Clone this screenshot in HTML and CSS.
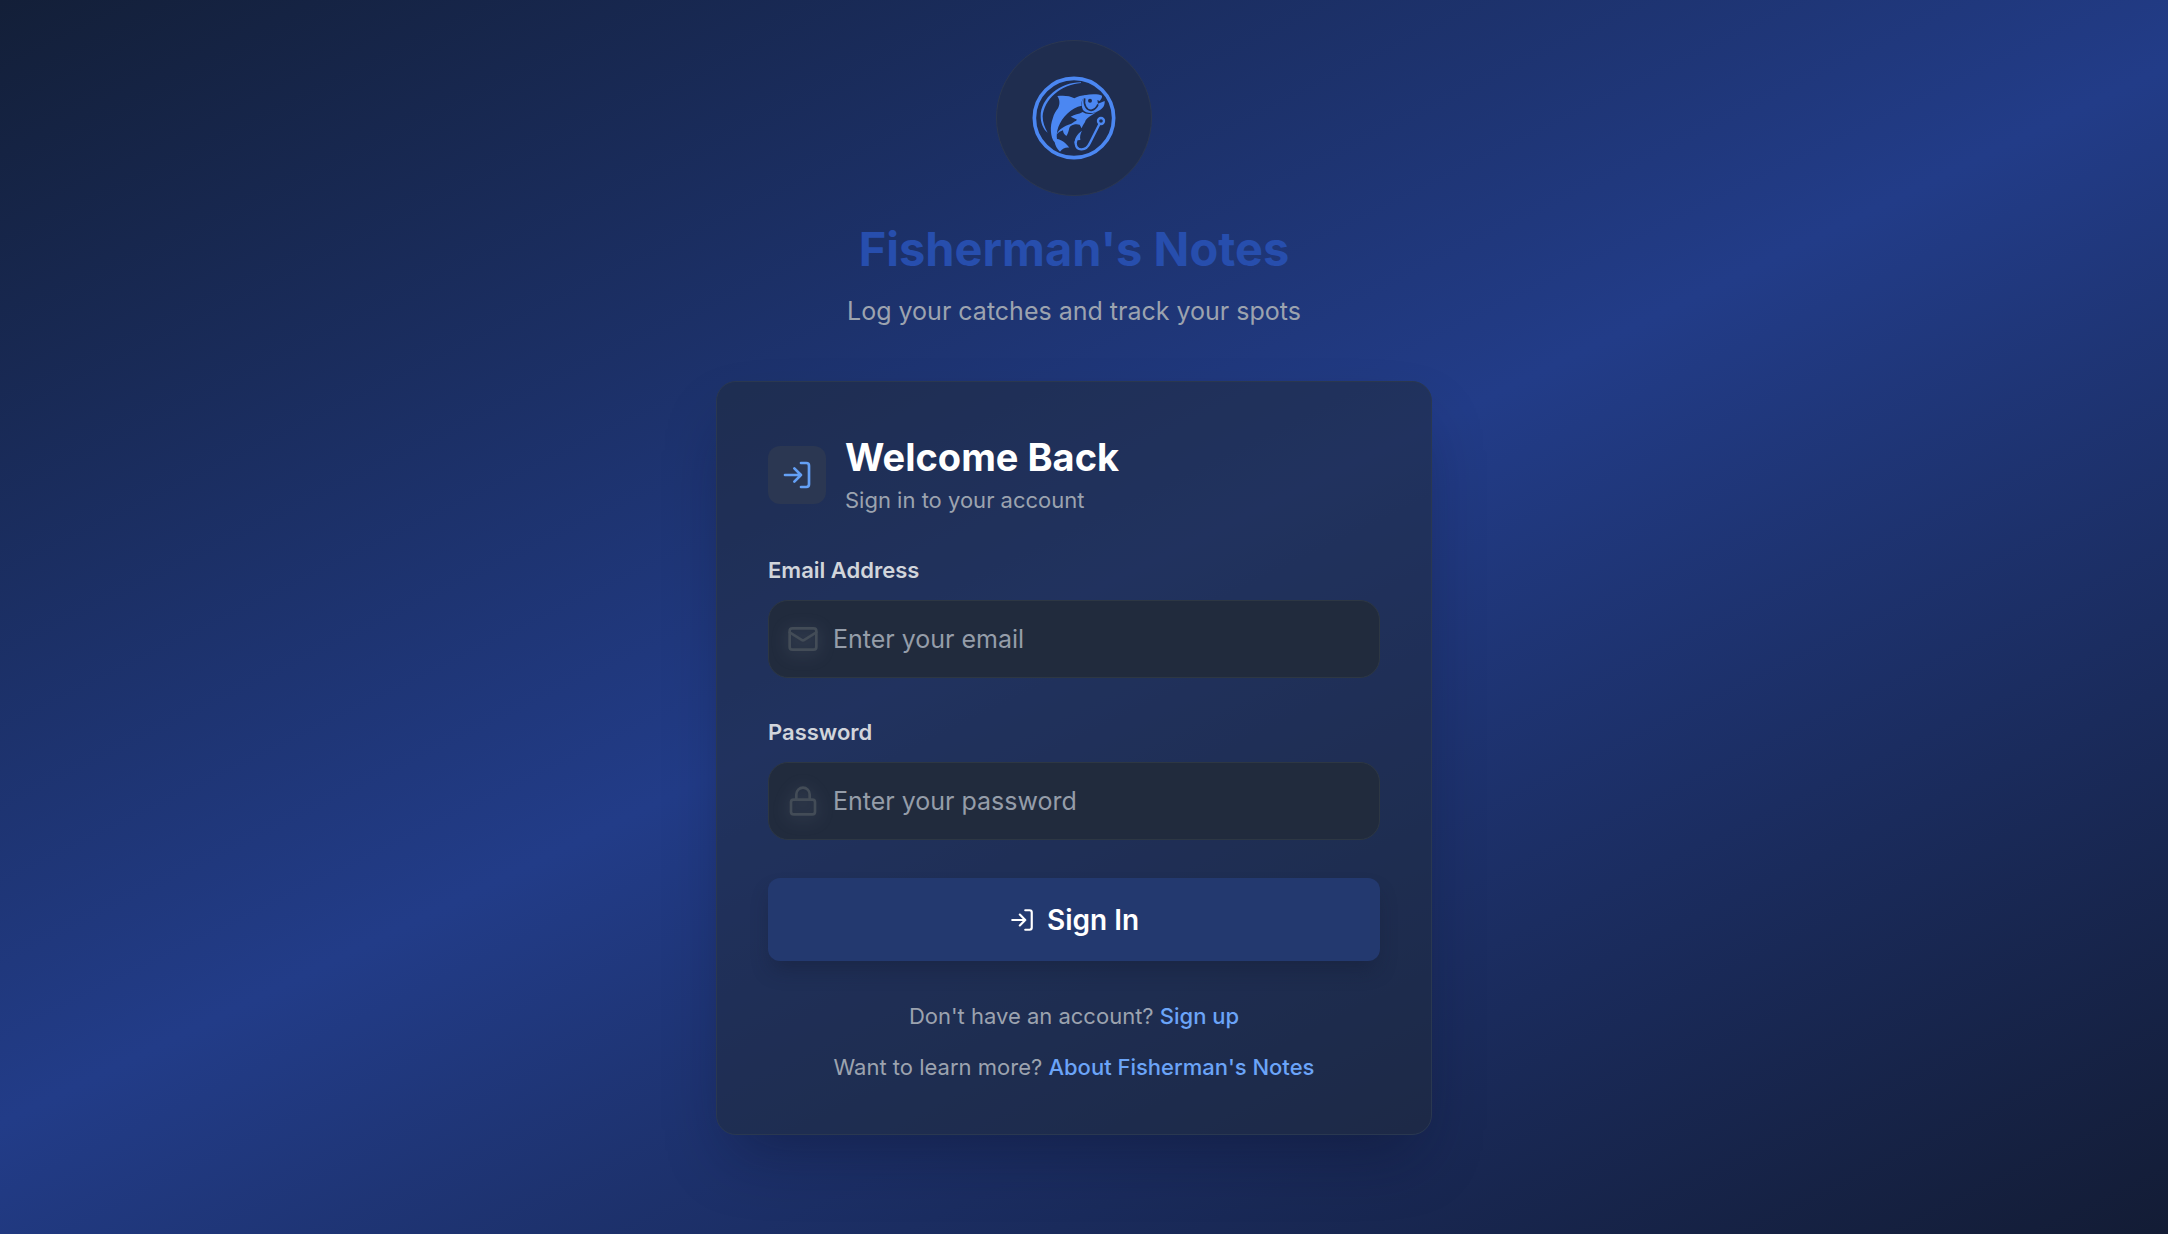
FILE: index.html
```html
<!DOCTYPE html>
<html lang="en">
<head>
<meta charset="utf-8">
<meta name="viewport" content="width=device-width, initial-scale=1">
<title>Fisherman's Notes</title>
<link rel="stylesheet" href="styles.css">
</head>
<body>
<main class="page">
  <header class="brand">
    <div class="brand-badge">
      <svg class="brand-logo" viewBox="22 17 252 252" aria-hidden="true">
        <circle cx="148" cy="143" r="119" fill="none" stroke="currentColor" stroke-width="11"/>
        <path d="M169 36C105 36 48 84 48 138C48 158 56 178 69 187C60 172 54 156 54 138C58 88 108 42 169 38Z" fill="currentColor"/>
        <path fill="currentColor" d="M98 77C114 75 135 75 149 84C160 78 170 75 184 74L173 88C170 96 170 100 171 106C140 112 112 140 101 170C97 182 95 196 97 206C110 208 124 218 134 232C122 231 114 234 106 244C97 236 92 226 90 216C76 200 76 165 84 145C88 130 94 122 100 114C106 102 106 88 98 77Z"/>
        <path fill="currentColor" d="M95 193C103 176 116 168 140 160L152 152L160 160C148 162 138 164 134 172C132 182 130 190 125 197C119 192 115 188 115 180C108 182 102 186 95 193Z"/>
        <path fill="currentColor" d="M138 139C150 131 162 133 174 125C184 132 200 134 216 124C200 136 187 142 183 150C181 158 174 164 171 174L165 163L146 160L157 148Z"/>
        <path fill="currentColor" d="M180 75C200 70 222 71 232 76C233 82 229 87 225 92L218 89L220 100L240 92C241 106 234 116 222 121C206 131 184 130 175 119C170 109 171 98 173 88Z"/>
        <path class="logo-line" d="M180 84C176 104 186 121 200 120C210 118 216 112 220 102"/>
        <circle class="logo-eye" cx="196" cy="91" r="6"/>
        <circle cx="229" cy="152" r="9" fill="none" stroke="currentColor" stroke-width="7"/>
        <path d="M224 162L196 217C184 243 156 244 153 220C152 210 157 203 163 197" fill="none" stroke="currentColor" stroke-width="7"/>
        <path d="M172 181C158 191 150 202 150 218L158 210L167 209C165 198 167 190 172 181Z" fill="currentColor"/>
      </svg>
    </div>
    <h1 class="brand-name">Fisherman's Notes</h1>
    <p class="brand-tagline">Log your catches and track your spots</p>
  </header>

  <section class="card" aria-labelledby="card-title">
    <div class="card-head">
      <span class="card-icon">
        <svg class="icon icon-md" viewBox="0 0 24 24" aria-hidden="true"><path d="M15 3h4a2 2 0 0 1 2 2v14a2 2 0 0 1-2 2h-4M10 17l5-5-5-5M15 12H3"/></svg>
      </span>
      <div>
        <h2 class="card-title" id="card-title">Welcome Back</h2>
        <p class="card-subtitle">Sign in to your account</p>
      </div>
    </div>

    <form class="form">
      <div class="field">
        <label class="field-label" for="email">Email Address</label>
        <div class="field-box">
          <svg class="icon icon-field" viewBox="0 0 24 24" aria-hidden="true"><rect x="2" y="4" width="20" height="16" rx="2"/><path d="m22 7-8.97 5.7a1.94 1.94 0 0 1-2.06 0L2 7"/></svg>
          <input class="field-input" id="email" type="email" placeholder="Enter your email">
        </div>
      </div>
      <div class="field">
        <label class="field-label" for="password">Password</label>
        <div class="field-box">
          <svg class="icon icon-field" viewBox="0 0 24 24" aria-hidden="true"><rect x="3" y="11" width="18" height="11" rx="2"/><path d="M7 11V7a5 5 0 0 1 10 0v4"/></svg>
          <input class="field-input" id="password" type="password" placeholder="Enter your password">
        </div>
      </div>
      <button class="submit" type="submit">
        <svg class="icon icon-sm" viewBox="0 0 24 24" aria-hidden="true"><path d="M15 3h4a2 2 0 0 1 2 2v14a2 2 0 0 1-2 2h-4M10 17l5-5-5-5M15 12H3"/></svg>
        Sign In
      </button>
    </form>

    <div class="card-links">
      <p>Don't have an account? <a href="#signup">Sign up</a></p>
      <p>Want to learn more? <a href="#about">About Fisherman's Notes</a></p>
    </div>
  </section>
</main>
</body>
</html>
```
FILE: styles.css
```css
*,
*::before,
*::after {
  box-sizing: border-box;
}

body,
h1,
h2,
p {
  margin: 0;
}

body {
  font-family: Inter, "Liberation Sans", sans-serif;
  font-size: 22px;
  line-height: 32px;
  color: #9ca3af;
  background: #111827;
}

.page {
  min-height: 100vh;
  padding: 40px 20px 40px 0;
  display: flex;
  flex-direction: column;
  align-items: center;
  gap: 51px;
  background: linear-gradient(154deg, #131f38, #223c88 49%, #131c35);
}

.brand {
  display: flex;
  flex-direction: column;
  align-items: center;
  text-align: center;
}

.brand-badge {
  width: 156px;
  height: 156px;
  display: grid;
  place-items: center;
  color: #4b87f2;
  background: #1f2d4f;
  border: 1px solid #2b3750;
  border-radius: 50%;
}

.brand-logo {
  width: 84px;
  height: 84px;
}

.logo-line {
  fill: none;
  stroke: #1f2d4f;
  stroke-width: 5;
}

.logo-eye {
  fill: #1f2d4f;
}

.brand-name {
  margin-top: 22px;
  font-size: 47px;
  line-height: 62px;
  font-weight: 700;
  color: #274ead;
}

.brand-tagline {
  margin-top: 12px;
  font-size: 25px;
  line-height: 38px;
}

.card {
  width: 716px;
  max-width: 100%;
  padding: 51px;
  border: 1px solid #2a3850;
  border-radius: 20px;
  background: rgba(33, 42, 58, 0.52);
  box-shadow: 0 32px 64px -16px rgba(10, 16, 40, 0.4);
}

.card-head {
  display: flex;
  align-items: center;
  gap: 19px;
}

.card-icon {
  width: 58px;
  height: 58px;
  display: grid;
  place-items: center;
  color: #64a0f5;
  background: #2b3752;
  border-radius: 12px;
}

.card-title {
  font-size: 38px;
  line-height: 48px;
  font-weight: 700;
  color: #fff;
}

.card-subtitle {
  margin-top: 3px;
}

.icon {
  flex: none;
  fill: none;
  stroke: currentColor;
  stroke-width: 2;
  stroke-linecap: round;
  stroke-linejoin: round;
}

.icon-md {
  width: 32px;
  height: 32px;
}

.icon-sm {
  width: 26px;
  height: 26px;
}

.icon-field {
  width: 32px;
  height: 32px;
  color: #434c57;
  filter: drop-shadow(0 3px 8px rgba(120, 130, 150, 0.4));
}

.form {
  margin-top: 38px;
  display: flex;
  flex-direction: column;
  gap: 38px;
}

.field {
  display: flex;
  flex-direction: column;
  gap: 14px;
}

.field-label {
  line-height: 32px;
  font-weight: 600;
  color: #d1d5db;
}

.field-box {
  height: 78px;
  padding: 0 18px;
  display: flex;
  align-items: center;
  gap: 14px;
  background: #212b3d;
  border: 1px solid #2d3743;
  border-radius: 20px;
}

.field-input {
  flex: 1;
  min-width: 0;
  height: 100%;
  padding: 0;
  border: 0;
  outline: 0;
  background: none;
  font: inherit;
  font-size: 25px;
  color: #fff;
}

.field-input::placeholder {
  color: #959da9;
  opacity: 1;
}

.submit {
  height: 83px;
  display: flex;
  align-items: center;
  justify-content: center;
  gap: 12px;
  font: inherit;
  font-size: 28px;
  font-weight: 600;
  color: #fff;
  background: #23396f;
  border: 0;
  border-radius: 12px;
  box-shadow: 0 12px 20px -4px rgba(20, 28, 50, 0.4);
}

.card-links {
  margin-top: 39px;
  display: flex;
  flex-direction: column;
  gap: 19px;
  text-align: center;
}

.card-links a {
  font-weight: 500;
  color: #6ba4f8;
  text-decoration: none;
}
```
